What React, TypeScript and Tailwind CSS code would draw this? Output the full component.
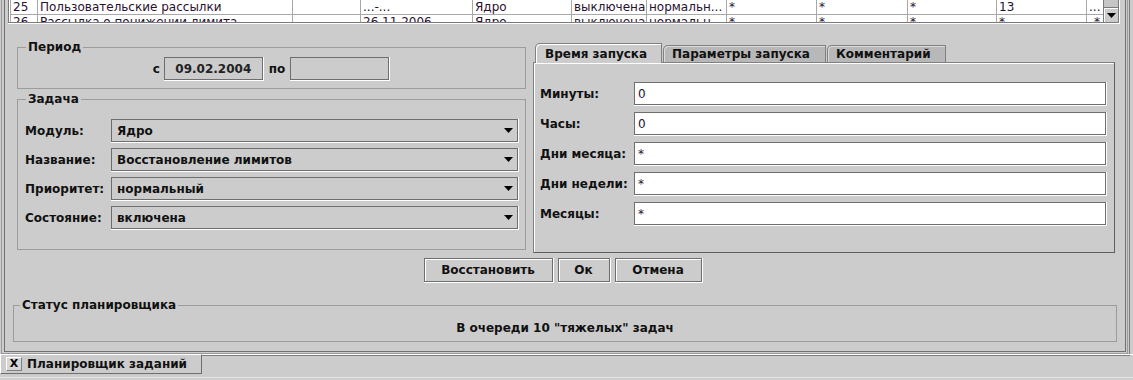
import React from "react";

const cols = [28, 255, 68, 112, 99, 75, 80, 90, 91, 89, 90, 16];
const rows = [
  ["25", "Пользовательские рассылки", "", "...-...", "Ядро", "выключена", "нормальн...", "*", "*", "*", "13", "..."],
  ["26", "Рассылка о понижении лимита", "", "26.11.2006", "Ядро", "выключена", "нормальн...", "*", "*", "*", "*", "*"],
];

function Arrow() {
  return (
    <svg width="9" height="5" viewBox="0 0 9 5" className="shrink-0">
      <polygon points="0,0 9,0 4.5,5" fill="#000" />
    </svg>
  );
}

function Combo({ value }: { value: string }) {
  return (
    <div className="flex-1 h-[24px] border-r border-b border-white">
      <div className="h-full border border-[#6e6e6e] flex items-center pl-[5px] pr-[4px]">
        <span className="flex-1 font-bold text-[12px] leading-[14px] text-[#111]">{value}</span>
        <Arrow />
      </div>
    </div>
  );
}

function Field({ value }: { value: string }) {
  return (
    <div className="flex-1 h-[24px] border-r border-b border-white">
      <div className="h-full border border-[#6e6e6e] bg-white flex items-center pl-[3px]">
        <span className="text-[12px] leading-[14px] text-[#2a1030]">{value}</span>
      </div>
    </div>
  );
}

function DateField({ value }: { value: string }) {
  return (
    <div className="w-[100px] h-[24px] border-r border-b border-white">
      <div className="h-full border border-[#6e6e6e] flex items-center justify-center">
        <span className="font-bold text-[12px] leading-[14px] text-[#222]">{value}</span>
      </div>
    </div>
  );
}

function Button({ label, w }: { label: string; w: string }) {
  return (
    <div className={`${w} h-[25px] border-r border-b border-white`}>
      <div className="h-full border border-[#6e6e6e] shadow-[inset_1px_1px_0_#ffffff] flex items-center justify-center">
        <span className="font-bold text-[12px] leading-[14px] text-[#111]">{label}</span>
      </div>
    </div>
  );
}

function Legend({ children, ml }: { children: React.ReactNode; ml: string }) {
  return (
    <legend className={`${ml} px-[2px] font-bold text-[12px] leading-[14px] text-[#111]`}>{children}</legend>
  );
}

export default function App() {
  return (
    <div className="w-[1133px] h-[380px] bg-[#cccccc] overflow-hidden flex flex-col font-['DejaVu_Sans',sans-serif]">
      {/* internal frame */}
      <div className="w-[1130px] h-[356px] shrink-0 border-r border-b border-[#7c7c7c] pl-[1px] pr-[1px] pb-[1px]">
        <div className="h-full border-l border-r border-b border-[#9a9a9a] pl-[2px] pr-[1px] pb-[1px]">
          <div className="h-full border-l border-r border-b border-[#707070] flex flex-col">
            {/* table pane */}
            <div className="ml-[3px] w-[1112px] border-r border-b border-white">
              <div className="h-[23px] border-l border-b border-[#7a7a7a] flex overflow-hidden">
                <div className="w-[1094px] bg-white pl-[1px] overflow-hidden">
                  {rows.map((r, ri) => (
                    <div key={ri} className="flex h-[15px] border-b border-[#a8a8a8]">
                      {r.map((c, ci) => (
                        <div
                          key={ci}
                          style={{ width: cols[ci] }}
                          className={`shrink-0 h-[14px] overflow-hidden whitespace-nowrap pl-[2px] text-[12px] leading-[14px] text-[#2a1030] ${
                            ci === 0 ? "border-l border-r border-[#a8a8a8]" : ci === cols.length - 1 ? "" : "border-r border-[#a8a8a8]"
                          } ${ci === cols.length - 1 && ri === 1 ? "text-right pr-[3px]" : ""}`}
                        >
                          {c}
                        </div>
                      ))}
                    </div>
                  ))}
                </div>
                <div className="w-[16px] flex flex-col border-l border-r border-[#7a7a7a] bg-[#c6c6c6]">
                  <div className="flex-1" />
                  <div className="h-[15px] border-t border-[#7a7a7a] bg-[#cccccc] shadow-[inset_1px_1px_0_#ffffff] flex items-center justify-center">
                    <Arrow />
                  </div>
                </div>
              </div>
            </div>

            {/* body */}
            <div className="flex items-start">
              {/* left column */}
              <div className="ml-[12px] w-[509px] pt-[16px] flex flex-col">
                <fieldset className="border border-[#9c9c9c] min-w-0 pt-[3px] pb-[7px]">
                  <Legend ml="ml-[8px]">Период</Legend>
                  <div className="flex items-center justify-center">
                    <span className="font-bold text-[12px] leading-[14px] text-[#111] mr-[4px]">с</span>
                    <DateField value="09.02.2004" />
                    <span className="font-bold text-[12px] leading-[14px] text-[#111] ml-[5px] mr-[5px]">по</span>
                    <DateField value="" />
                  </div>
                </fieldset>
                <fieldset className="mt-[3px] border border-[#9c9c9c] min-w-0 pt-[13px] pb-[19px] pl-[7px] pr-[6px]">
                  <Legend ml="ml-[1px]">Задача</Legend>
                  <div className="flex flex-col gap-[5px]">
                    {[
                      ["Модуль:", "Ядро"],
                      ["Название:", "Восстановление лимитов"],
                      ["Приоритет:", "нормальный"],
                      ["Состояние:", "включена"],
                    ].map(([l, v]) => (
                      <div key={l} className="flex items-center">
                        <span className="w-[86px] shrink-0 font-bold text-[12px] leading-[14px] text-[#111]">{l}</span>
                        <Combo value={v} />
                      </div>
                    ))}
                  </div>
                </fieldset>
              </div>

              {/* right column */}
              <div className="ml-[7px] w-[582px] pt-[18px] flex flex-col">
                <div className="flex items-end h-[20px] pl-[2px] gap-[1px] relative z-10">
                  <div className="w-[127px] h-[20px] -mb-[1px] bg-[#cccccc] border-t border-l border-r border-[#808080] rounded-tl-[5px] shadow-[inset_1px_1px_0_#ffffff] flex items-center pl-[9px]">
                    <span className="font-bold text-[12px] leading-[14px] text-[#111]">Время запуска</span>
                  </div>
                  <div className="w-[163px] h-[17px] bg-[#b8b8b8] border-t border-l border-r border-[#808080] rounded-tl-[5px] shadow-[inset_1px_1px_0_#dcdcdc] flex items-center pl-[8px]">
                    <span className="font-bold text-[12px] leading-[14px] text-[#111]">Параметры запуска</span>
                  </div>
                  <div className="w-[119px] h-[17px] bg-[#b8b8b8] border-t border-l border-r border-[#808080] rounded-tl-[5px] shadow-[inset_1px_1px_0_#dcdcdc] flex items-center pl-[8px]">
                    <span className="font-bold text-[12px] leading-[14px] text-[#111]">Комментарий</span>
                  </div>
                </div>
                <div className="h-[191px] border border-[#808080] border-r-[#5e5e5e] border-b-[#5e5e5e] shadow-[inset_1px_1px_0_#ffffff] pt-[19px] pl-[6px] pr-[7px] flex flex-col gap-[6px]">
                  {[
                    ["Минуты:", "0"],
                    ["Часы:", "0"],
                    ["Дни месяца:", "*"],
                    ["Дни недели:", "*"],
                    ["Месяцы:", "*"],
                  ].map(([l, v]) => (
                    <div key={l} className="flex items-center">
                      <span className="w-[94px] shrink-0 font-bold text-[12px] leading-[14px] text-[#111]">{l}</span>
                      <Field value={v} />
                    </div>
                  ))}
                </div>
              </div>
            </div>

            {/* buttons */}
            <div className="flex justify-center gap-[4px] mt-[5px] pr-[4px]">
              <Button label="Восстановить" w="w-[130px]" />
              <Button label="Ок" w="w-[53px]" />
              <Button label="Отмена" w="w-[88px]" />
            </div>

            {/* status */}
            <fieldset className="mt-[15px] mx-[8px] border border-[#9c9c9c] min-w-0 pt-[9px] pb-[6px]">
              <Legend ml="ml-[6px]">Статус планировщика</Legend>
              <div className="text-center font-bold text-[12px] leading-[14px] text-[#111]">
                В очереди 10 "тяжелых" задач
              </div>
            </fieldset>
          </div>
        </div>
      </div>

      {/* bottom tab bar */}
      <div className="relative -mt-[2px] h-[26px] flex flex-col">
        <div className="flex h-[20px]">
          <div className="w-[202px] h-[20px] bg-[#cccccc] border-t border-l border-white border-r border-b border-r-[#6e6e6e] border-b-[#6e6e6e] flex items-center pl-[5px]">
            <div className="w-[16px] h-[14px] border border-[#808080] border-t-white border-l-white bg-[#d6d6d6] flex items-center justify-center mr-[5px]">
              <span className="font-bold text-[11px] leading-[12px] text-[#000]">X</span>
            </div>
            <span className="font-bold text-[12px] leading-[14px] text-[#111]">Планировщик заданий</span>
          </div>
          <div className="flex-1 border-t border-white" />
        </div>
        <div className="h-[3px]" />
        <div className="h-[1px] bg-[#e6e6e6]" />
      </div>
    </div>
  );
}
